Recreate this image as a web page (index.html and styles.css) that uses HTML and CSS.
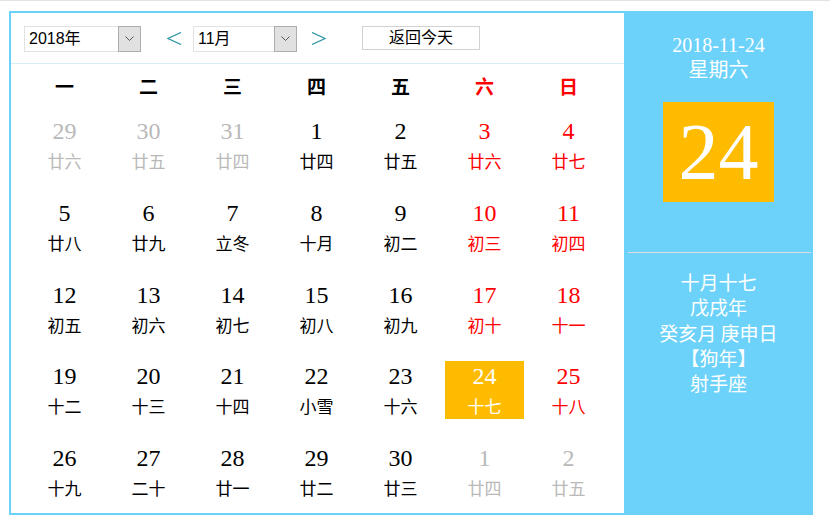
FILE: index.html
```html
<!DOCTYPE html>
<html lang="zh-CN">
<head>
<meta charset="utf-8">
<title>万年历</title>
<link rel="stylesheet" href="styles.css">
</head>
<body>
<div class="topline"></div>
<div class="calendar">
  <div class="main">
    <div class="toolbar">
      <div class="select year">
        <span class="select-text">2018年</span>
        <span class="select-btn"><svg width="9" height="6" viewBox="0 0 9 6"><polyline points="0.5,0.5 4.5,4.5 8.5,0.5" fill="none" stroke="#555" stroke-width="1"/></svg></span>
      </div>
      <span class="nav prev"><svg width="15" height="13" viewBox="0 0 15 13"><polyline points="14,0.5 1,6.5 14,12.5" fill="none" stroke="#2e93a6" stroke-width="1.3"/></svg></span>
      <div class="select month">
        <span class="select-text">11月</span>
        <span class="select-btn"><svg width="9" height="6" viewBox="0 0 9 6"><polyline points="0.5,0.5 4.5,4.5 8.5,0.5" fill="none" stroke="#555" stroke-width="1"/></svg></span>
      </div>
      <span class="nav next"><svg width="15" height="13" viewBox="0 0 15 13"><polyline points="1,0.5 14,6.5 1,12.5" fill="none" stroke="#2e93a6" stroke-width="1.3"/></svg></span>
      <button class="today-btn">返回今天</button>
    </div>
    <div class="weekdays">
      <span>一</span><span>二</span><span>三</span><span>四</span><span>五</span><span class="red">六</span><span class="red">日</span>
    </div>
    <div class="days">
      <div class="day other"><span class="num">29</span><span class="lunar">廿六</span></div>
      <div class="day other"><span class="num">30</span><span class="lunar">廿五</span></div>
      <div class="day other"><span class="num">31</span><span class="lunar">廿四</span></div>
      <div class="day"><span class="num">1</span><span class="lunar">廿四</span></div>
      <div class="day"><span class="num">2</span><span class="lunar">廿五</span></div>
      <div class="day red"><span class="num">3</span><span class="lunar">廿六</span></div>
      <div class="day red"><span class="num">4</span><span class="lunar">廿七</span></div>

      <div class="day"><span class="num">5</span><span class="lunar">廿八</span></div>
      <div class="day"><span class="num">6</span><span class="lunar">廿九</span></div>
      <div class="day"><span class="num">7</span><span class="lunar">立冬</span></div>
      <div class="day"><span class="num">8</span><span class="lunar">十月</span></div>
      <div class="day"><span class="num">9</span><span class="lunar">初二</span></div>
      <div class="day red"><span class="num">10</span><span class="lunar">初三</span></div>
      <div class="day red"><span class="num">11</span><span class="lunar">初四</span></div>

      <div class="day"><span class="num">12</span><span class="lunar">初五</span></div>
      <div class="day"><span class="num">13</span><span class="lunar">初六</span></div>
      <div class="day"><span class="num">14</span><span class="lunar">初七</span></div>
      <div class="day"><span class="num">15</span><span class="lunar">初八</span></div>
      <div class="day"><span class="num">16</span><span class="lunar">初九</span></div>
      <div class="day red"><span class="num">17</span><span class="lunar">初十</span></div>
      <div class="day red"><span class="num">18</span><span class="lunar">十一</span></div>

      <div class="day"><span class="num">19</span><span class="lunar">十二</span></div>
      <div class="day"><span class="num">20</span><span class="lunar">十三</span></div>
      <div class="day"><span class="num">21</span><span class="lunar">十四</span></div>
      <div class="day"><span class="num">22</span><span class="lunar">小雪</span></div>
      <div class="day"><span class="num">23</span><span class="lunar">十六</span></div>
      <div class="day today"><span class="num">24</span><span class="lunar">十七</span></div>
      <div class="day red"><span class="num">25</span><span class="lunar">十八</span></div>

      <div class="day"><span class="num">26</span><span class="lunar">十九</span></div>
      <div class="day"><span class="num">27</span><span class="lunar">二十</span></div>
      <div class="day"><span class="num">28</span><span class="lunar">廿一</span></div>
      <div class="day"><span class="num">29</span><span class="lunar">廿二</span></div>
      <div class="day"><span class="num">30</span><span class="lunar">廿三</span></div>
      <div class="day other"><span class="num">1</span><span class="lunar">廿四</span></div>
      <div class="day other"><span class="num">2</span><span class="lunar">廿五</span></div>
    </div>
  </div>
  <div class="side">
    <div class="side-date">2018-11-24</div>
    <div class="side-week">星期六</div>
    <div class="side-big">24</div>
    <div class="side-divider"></div>
    <div class="side-info">
      <div>十月十七</div>
      <div>戊戌年</div>
      <div>癸亥月 庚申日</div>
      <div>【狗年】</div>
      <div>射手座</div>
    </div>
  </div>
</div>
</body>
</html>
```

FILE: styles.css
```css
html, body {
  margin: 0;
  padding: 0;
  background: #fff;
}

body {
  font-family: "Liberation Sans", "Noto Sans CJK SC", sans-serif;
  color: #000;
}

.topline {
  height: 1px;
  background: #e3e3e3;
  margin-bottom: 10px;
}

.calendar {
  display: flex;
  width: 802px;
  height: 500px;
  margin-left: 9px;
  border: 2px solid #6cd2fa;
  border-right: 0;
}

.main {
  width: 613px;
  display: flex;
  flex-direction: column;
}

.toolbar {
  height: 51px;
  border-bottom: 1px solid #d5eef8;
  display: flex;
  align-items: center;
  padding-left: 13px;
  padding-top: 1px;
  box-sizing: border-box;
}

.select {
  display: flex;
  align-items: stretch;
  height: 26px;
  border: 1px solid #e2e2e2;
  box-sizing: border-box;
  font-size: 16px;
}

.select.year { width: 117px; }
.select.month { width: 104px; }

.select-text {
  flex: 1;
  padding-left: 4px;
  line-height: 24px;
}

.select-btn {
  width: 21px;
  background: #e1e1e1;
  border: 1px solid #adadad;
  margin: -1px -1px -1px 0;
  display: flex;
  align-items: center;
  justify-content: center;
}

.nav {
  display: flex;
  align-items: center;
  height: 26px;
}

.nav.prev { margin: 0 11px 0 26px; }
.nav.next { margin: 0 36px 0 14px; }

.today-btn {
  width: 118px;
  height: 24px;
  border: 1px solid #d2d2d2;
  background: #fff;
  font-family: "Liberation Sans", "Noto Sans CJK SC", sans-serif;
  font-size: 16px;
  color: #000;
  padding: 0;
  line-height: 22px;
  margin-top: -1px;
}

.weekdays {
  display: grid;
  grid-template-columns: repeat(7, 79px);
  column-gap: 5px;
  padding-left: 14px;
  height: 44px;
  align-items: center;
  font-family: "Noto Sans CJK SC", sans-serif;
  font-weight: bold;
  font-size: 19px;
}

.weekdays span {
  text-align: center;
  line-height: 44px;
}

.red { color: #ff0000; }

.days {
  display: grid;
  grid-template-columns: repeat(7, 79px);
  grid-auto-rows: 58px;
  column-gap: 5px;
  row-gap: 23.75px;
  padding-left: 14px;
  margin-top: 8px;
}

.day {
  display: flex;
  flex-direction: column;
  align-items: center;
}

.num {
  font-family: "Liberation Serif", serif;
  font-size: 24px;
  line-height: 31px;
}

.lunar {
  font-family: "Noto Sans CJK SC", sans-serif;
  font-size: 17px;
  line-height: 27px;
}

.day.other { color: #b9b9b9; }
.day.red { color: #ff0000; }

.day.today {
  background: #ffbb00;
  color: #fff;
}

.side {
  width: 189px;
  background: #6cd2fa;
  color: #fff;
  display: flex;
  flex-direction: column;
  align-items: center;
  padding-top: 20px;
  box-sizing: border-box;
}

.side-date, .side-week {
  font-family: "Liberation Serif", "Noto Sans CJK SC", serif;
  font-size: 20px;
  line-height: 25px;
}

.side-big {
  margin-top: 19px;
  width: 111px;
  height: 100px;
  background: #ffbb00;
  font-family: "Liberation Serif", serif;
  font-size: 80px;
  line-height: 100px;
  text-align: center;
}

.side-divider {
  align-self: stretch;
  height: 1px;
  background: #d8dde0;
  margin: 50px 2px 0 4px;
}

.side-info {
  margin-top: 16px;
  font-family: "Noto Sans CJK SC", sans-serif;
  font-size: 19px;
  line-height: 25.25px;
  text-align: center;
}
```
